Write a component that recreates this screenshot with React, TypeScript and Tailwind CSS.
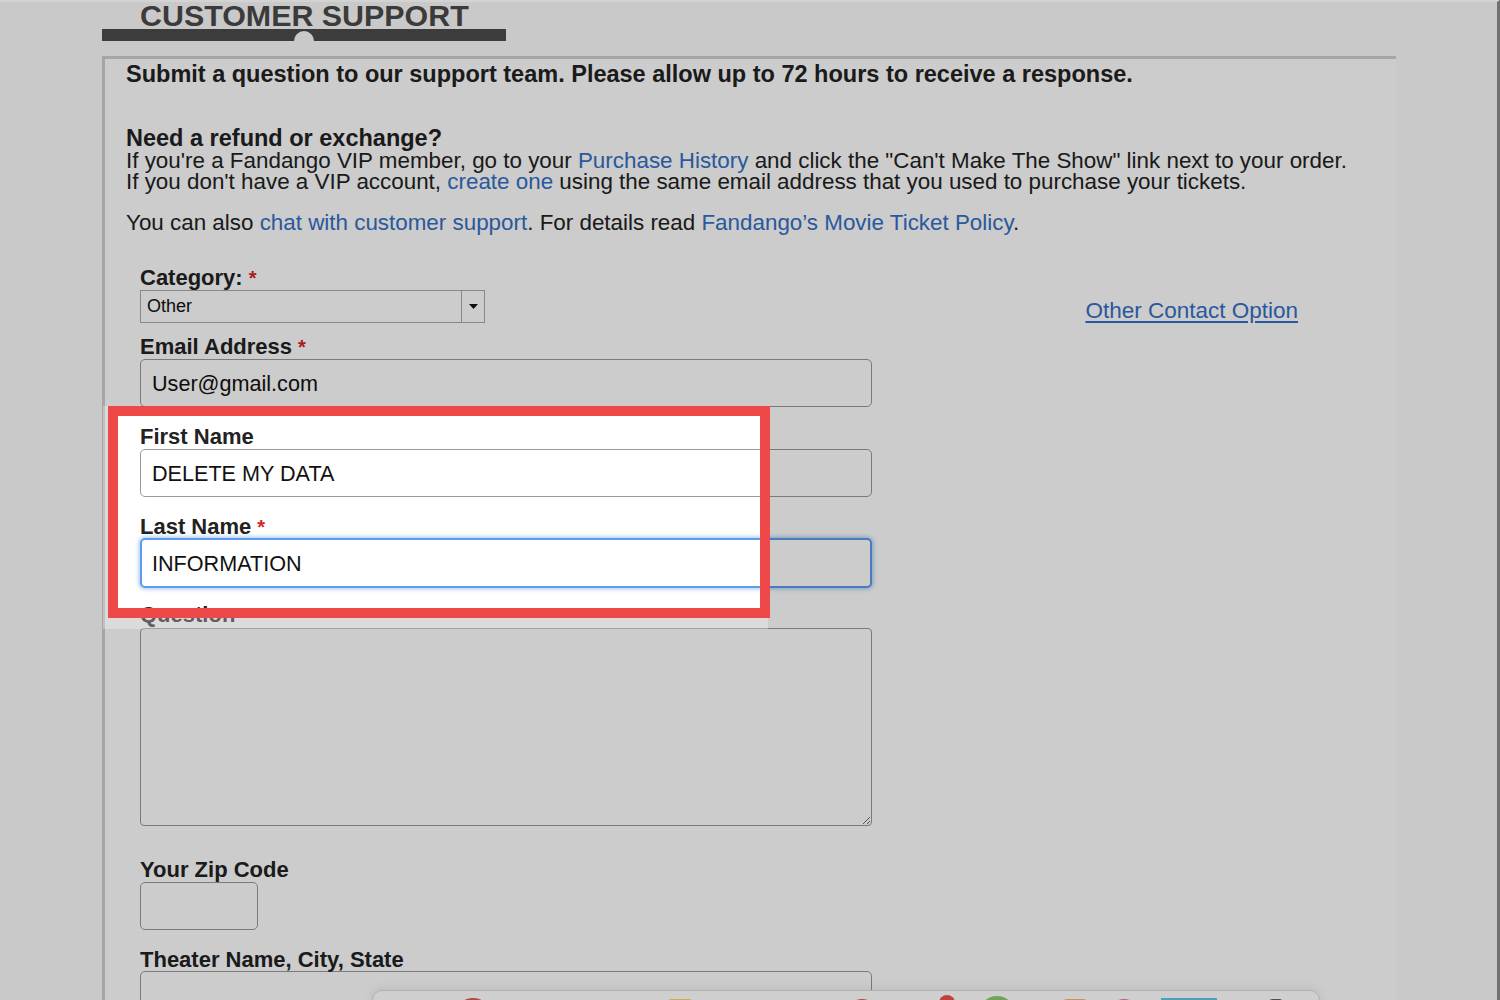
import React from "react";

const Star = () => <span className="ml-[6px] text-[20px] text-[#d62323]">*</span>;

function Label({ children, star, className = "" }: { children: React.ReactNode; star?: boolean; className?: string }) {
  return (
    <div className={"text-[22px] font-bold leading-[26px] -mb-[2px] text-[#222] " + className}>
      {children}
      {star && <Star />}
    </div>
  );
}

function Field({ value, className = "" }: { value?: string; className?: string }) {
  return (
    <div className={"flex h-[48px] items-center rounded-[5px] border border-[#999] bg-white pl-[11px] pt-[3px] text-[21.6px] text-[#111] " + className}>
      {value}
    </div>
  );
}

export default function App() {
  const link = "text-[#346fc4]";
  return (
    <div className="relative h-[1000px] w-[1500px] overflow-hidden border-r-[3px] border-t-2 border-r-[#717171] border-t-[#d3d3d3] bg-[#fcfcfc] font-['Liberation_Sans',Arial,sans-serif]">
      {/* header */}
      <div className="ml-[102px] w-[404px]">
        <div className="h-[27px] pl-[38px] text-[30.4px] font-bold leading-[26px] text-[#4a4a4a]">CUSTOMER SUPPORT</div>
        <div className="flex h-[12px] items-end justify-center bg-[#4b4b4b]">
          <div className="h-[10px] w-[20px] rounded-t-full bg-[#fcfcfc]" />
        </div>
      </div>

      {/* panel */}
      <div className="ml-[102px] mt-[15px] h-[1000px] w-[1294px] border-l-[3px] border-t-[3px] border-[#d0d0d0] bg-white pl-[21px] pt-[3px] text-[#222]">
        <div className="text-[23.5px] font-bold leading-[24px]">
          Submit a question to our support team. Please allow up to 72 hours to receive a response.
        </div>
        <div className="mt-[40px] text-[23.5px] font-bold leading-[24px]">Need a refund or exchange?</div>
        <div className="text-[22.4px] leading-[21px]">
          If you're a Fandango VIP member, go to your <span className={link}>Purchase History</span> and click the "Can't Make The Show" link next to your order.
        </div>
        <div className="text-[22.4px] leading-[21px]">
          If you don't have a VIP account, <span className={link}>create one</span> using the same email address that you used to purchase your tickets.
        </div>
        <div className="mt-[20px] text-[22.4px] leading-[22px]">
          You can also <span className={link}>chat with customer support</span>. For details read{" "}
          <span className={link}>Fandango’s Movie Ticket Policy</span>.
        </div>

        {/* form */}
        <div className="ml-[14px] mt-[31px] pr-[98px]">
          <div className="flex items-end justify-between">
            <div>
              <Label star>Category:</Label>
              <div className="mt-[1px] flex h-[33px] w-[345px] items-center border border-[#aaa] bg-white text-[18px] text-[#111]">
                <div className="flex-1 pl-[6px]">Other</div>
                <div className="flex h-full w-[23px] items-center justify-center border-l border-[#aaa]">
                  <svg width="9" height="5" viewBox="0 0 9 5">
                    <path d="M0 0 H9 L4.5 5 Z" fill="#111" />
                  </svg>
                </div>
              </div>
            </div>
            <div className="text-[22.5px] leading-[24px] text-[#346fc4] underline underline-offset-[3px]">Other Contact Option</div>
          </div>

          <Label star className="mt-[11px]">Email Address</Label>
          <Field value="User@gmail.com" className="mt-[1px] w-[732px]" />

          <Label className="mt-[17px]">First Name</Label>
          <Field value="DELETE MY DATA" className="mt-[1px] w-[732px]" />

          <Label star className="mt-[17px]">Last Name</Label>
          <div className="flex h-[50px] w-[732px] items-center rounded-[5px] border-2 border-[#5d9cec] bg-white pl-[10px] pt-[3px] text-[21.6px] text-[#111] shadow-[0_0_4px_1px_rgba(93,156,236,0.6)]">
            INFORMATION
          </div>

          <Label className="mt-[14px]">Question</Label>
          <textarea
            readOnly
            className="mt-[2px] block h-[198px] w-[732px] rounded-[4px] border border-[#999] bg-white"
          />

          <Label className="mt-[31px]">Your Zip Code</Label>
          <Field className="mt-[1px] w-[118px]" />

          <Label className="mt-[17px]">Theater Name, City, State</Label>
          <Field className="w-[732px]" />
        </div>
      </div>

      {/* spotlight dim + red frame */}
      <div className="pointer-events-none absolute left-[108px] top-[404px] h-[212px] w-[662px] border-[10px] border-[#ef4848] shadow-[0_0_0_3000px_rgba(0,0,0,0.2)]" />
      <div className="pointer-events-none absolute left-[103px] top-[404px] h-[223px] w-[5px] bg-[rgba(255,255,255,0.3)]" />
      <div className="pointer-events-none absolute left-[108px] top-[616px] h-[11px] w-[660px] bg-[rgba(255,255,255,0.3)]" />

      {/* dock */}
      <div className="absolute left-[372px] top-[988px] flex h-[40px] w-[948px] items-start overflow-hidden rounded-t-[10px] border border-[#b2b2b2] bg-[#cfcfcf] pl-[82px] shadow-[0_-2px_8px_rgba(0,0,0,0.08)]">
        <div className="mt-[7px] h-[36px] w-[36px] shrink-0 rounded-full bg-[#b5473f]" />
        <div className="ml-[114px] mt-[9px] h-[30px] w-[10px] shrink-0 rounded-t-[4px] bg-[#8a4a44]" />
        <div className="ml-[50px] mt-[8px] h-[30px] w-[24px] shrink-0 -skew-x-12 rounded-t-[3px] bg-[#c9b14a]" />
        <div className="ml-[56px] mt-[10px] h-[32px] w-[32px] shrink-0 rounded-full bg-[#dadada]" />
        <div className="ml-[68px] mt-[8px] h-[34px] w-[34px] shrink-0 rounded-full bg-[#b5473f]" />
        <div className="ml-[22px] mt-[10px] h-[32px] w-[32px] shrink-0 rounded-full bg-[#e0e0e0]" />
        <div className="ml-[6px] mt-[4px] h-[30px] w-[16px] shrink-0 rounded-t-full bg-[#c0433b]" />
        <div className="ml-[24px] mt-[5px] h-[36px] w-[36px] shrink-0 rounded-full bg-[#6fa653]" />
        <div className="ml-[18px] mt-[10px] h-[30px] w-[16px] shrink-0 rounded-t-full bg-[#b34238]" />
        <div className="ml-[14px] mt-[8px] h-[30px] w-[24px] shrink-0 rounded-t-[4px] bg-[#c7955a]" />
        <div className="ml-[20px] mt-[8px] h-[34px] w-[34px] shrink-0 rounded-full bg-[#b55c99]" />
        <div className="ml-[20px] mt-[7px] h-[34px] w-[56px] shrink-0 border-2 border-[#4ba2b8] bg-[#2b2f33]" />
        <div className="ml-[12px] mt-[12px] h-[30px] w-[14px] shrink-0 rounded-t-full bg-[#a8a8a8]" />
        <div className="ml-[26px] mt-[8px] h-[30px] w-[14px] shrink-0 rounded-t-[4px] bg-[#4e4e4e]" />
      </div>
    </div>
  );
}
